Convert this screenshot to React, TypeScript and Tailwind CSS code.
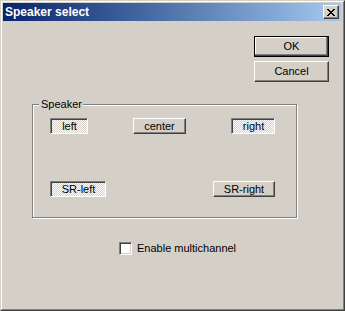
import React from "react";

const font = "font-['Liberation_Sans',Arial,sans-serif]";

function CloseGlyph() {
  const rows = [
    "XX....XX",
    ".XX..XX.",
    "..XXXX..",
    "...XX...",
    "..XXXX..",
    ".XX..XX.",
    "XX....XX",
  ];
  const rects: React.ReactElement[] = [];
  rows.forEach((r, y) =>
    r.split("").forEach((c, x) => {
      if (c === "X") rects.push(<rect key={`${x}-${y}`} x={x} y={y} width={1} height={1} fill="#000" />);
    })
  );
  return (
    <svg width="8" height="7" viewBox="0 0 8 7" shapeRendering="crispEdges">
      {rects}
    </svg>
  );
}

const raised =
  "border border-t-white border-l-white border-r-[#404040] border-b-[#404040] shadow-[inset_-1px_-1px_0_#808080] bg-[#d4d0c8]";
const pressed =
  "border border-t-[#808080] border-l-[#808080] border-r-white border-b-white shadow-[inset_1px_1px_0_#404040] bg-[conic-gradient(#ffffff_25%,#d4d0c8_0_50%,#ffffff_0_75%,#d4d0c8_0)] bg-[length:2px_2px]";

function SpeakerButton({ label, w, on }: { label: string; w: string; on: boolean }) {
  return (
    <div
      className={`${w} h-[16px] flex items-center justify-center text-[11px] leading-none text-black ${
        on ? pressed + " pl-[1px] pt-[1px]" : raised
      }`}
    >
      {label}
    </div>
  );
}

export default function App() {
  return (
    <div className={`${font} w-[345px] h-[311px] border border-t-[#d4d0c8] border-l-[#d4d0c8] border-r-[#404040] border-b-[#404040] bg-[#d4d0c8]`}>
      <div className="w-full h-full border border-t-white border-l-white border-r-[#808080] border-b-[#808080] pt-[1px] pl-[1px] pr-[2px] flex flex-col">
        {/* Title bar */}
        <div className="h-[18px] flex items-center justify-between bg-linear-to-r from-[#0a246a] to-[#a6caf0] pl-[2px] pr-[2px]">
          <span className="text-white font-bold text-[12px] leading-none">Speaker select</span>
          <div className={`w-[16px] h-[14px] flex items-center justify-center ${raised}`}>
            <CloseGlyph />
          </div>
        </div>

        {/* Body */}
        <div className="flex flex-col pl-[29px] text-[11px] text-black">
          <div className="flex flex-col items-end pr-[12px] pt-[15px] gap-[4px]">
            <div className="w-[75px] h-[21px] border border-black shadow-[inset_-1px_-1px_0_#404040,inset_-2px_-2px_0_#808080,inset_1px_1px_0_#fff] bg-[#d4d0c8] flex items-center justify-center leading-none">
              OK
            </div>
            <div className={`w-[75px] h-[21px] flex items-center justify-center leading-none ${raised}`}>
              Cancel
            </div>
          </div>

          {/* Group box */}
          <div className="relative mt-[22px] w-[265px] h-[114px] border border-[#808080] shadow-[inset_1px_1px_0_#fff,1px_1px_0_#fff]">
            <span className="absolute left-[6px] top-[-7px] h-[13px] leading-[13px] pl-[2px] pr-[1px] bg-[#d4d0c8]">
              Speaker
            </span>
            <div className="flex justify-between pl-[17px] pr-[21px] pt-[13px]">
              <SpeakerButton label="left" w="w-[38px]" on />
              <SpeakerButton label="center" w="w-[53px]" on={false} />
              <SpeakerButton label="right" w="w-[44px]" on />
            </div>
            <div className="flex justify-between pl-[17px] pr-[21px] mt-[47px]">
              <SpeakerButton label="SR-left" w="w-[56px]" on />
              <SpeakerButton label="SR-right" w="w-[62px]" on={false} />
            </div>
          </div>

          {/* Checkbox */}
          <div className="flex items-center mt-[24px] ml-[87px] gap-[5px]">
            <div className="w-[13px] h-[13px] bg-white border border-t-[#808080] border-l-[#808080] border-r-white border-b-white shadow-[inset_1px_1px_0_#404040,inset_-1px_-1px_0_#d4d0c8]" />
            <span className="leading-none">Enable multichannel</span>
          </div>
        </div>
      </div>
    </div>
  );
}
